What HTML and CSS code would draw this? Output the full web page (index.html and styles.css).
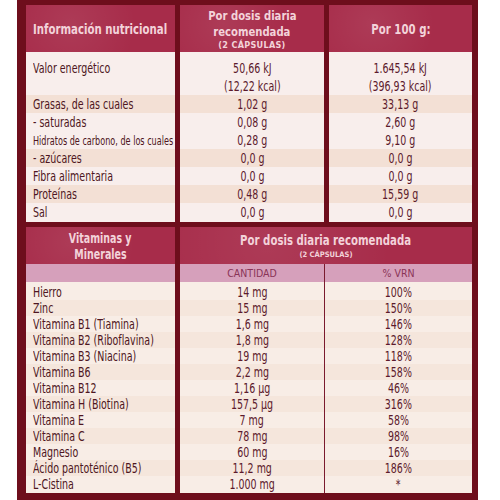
FILE: index.html
```html
<!DOCTYPE html>
<html lang="es">
<head>
    <meta charset="UTF-8">
    <title>Información nutricional</title>
    <link rel="stylesheet" href="styles.css">
</head>
<body>
    <div class="frame">
        <!-- Información nutricional -->
        <div class="table top">
            <div class="head left"><span class="t">Información nutricional</span></div>
            <div class="head two"><span class="t">Por dosis diaria</span><span class="t">recomendada</span><span class="small">(2 CÁPSULAS)</span></div>
            <div class="head"><span class="t">Por 100 g:</span></div>

            <div class="cell name first"><span class="t">Valor energético</span></div>
            <div class="cell val first"><span class="t">50,66 kJ<br>(12,22 kcal)</span></div>
            <div class="cell val first"><span class="t">1.645,54 kJ<br>(396,93 kcal)</span></div>

            <div class="cell name alt"><span class="t">Grasas, de las cuales</span></div>
            <div class="cell val alt"><span class="t">1,02 g</span></div>
            <div class="cell val alt"><span class="t">33,13 g</span></div>

            <div class="cell name"><span class="t">- saturadas</span></div>
            <div class="cell val"><span class="t">0,08 g</span></div>
            <div class="cell val"><span class="t">2,60 g</span></div>

            <div class="cell name"><span class="t tight">Hidratos de carbono, de los cuales</span></div>
            <div class="cell val"><span class="t">0,28 g</span></div>
            <div class="cell val"><span class="t">9,10 g</span></div>

            <div class="cell name alt"><span class="t">- azúcares</span></div>
            <div class="cell val alt"><span class="t">0,0 g</span></div>
            <div class="cell val alt"><span class="t">0,0 g</span></div>

            <div class="cell name"><span class="t">Fibra alimentaria</span></div>
            <div class="cell val"><span class="t">0,0 g</span></div>
            <div class="cell val"><span class="t">0,0 g</span></div>

            <div class="cell name alt"><span class="t">Proteínas</span></div>
            <div class="cell val alt"><span class="t">0,48 g</span></div>
            <div class="cell val alt"><span class="t">15,59 g</span></div>

            <div class="cell name last"><span class="t">Sal</span></div>
            <div class="cell val last"><span class="t">0,0 g</span></div>
            <div class="cell val last"><span class="t">0,0 g</span></div>
        </div>

        <!-- Vitaminas y Minerales -->
        <div class="table bottom">
            <div class="head name"><span class="t">Vitaminas y</span><span class="t">Minerales</span></div>
            <div class="head span"><span class="t">Por dosis diaria recomendada</span><span class="small mini">(2 CÁPSULAS)</span></div>

            <div class="sub name"></div>
            <div class="sub mid">CANTIDAD</div>
            <div class="sub">% VRN</div>

            <div class="row name top-pad"><span class="t">Hierro</span></div><div class="row val mid top-pad"><span class="t">14 mg</span></div><div class="row val top-pad"><span class="t">100%</span></div>
            <div class="row name alt"><span class="t">Zinc</span></div><div class="row val mid alt"><span class="t">15 mg</span></div><div class="row val alt"><span class="t">150%</span></div>
            <div class="row name"><span class="t">Vitamina B1 (Tiamina)</span></div><div class="row val mid"><span class="t">1,6 mg</span></div><div class="row val"><span class="t">146%</span></div>
            <div class="row name alt"><span class="t">Vitamina B2 (Riboflavina)</span></div><div class="row val mid alt"><span class="t">1,8 mg</span></div><div class="row val alt"><span class="t">128%</span></div>
            <div class="row name"><span class="t">Vitamina B3 (Niacina)</span></div><div class="row val mid"><span class="t">19 mg</span></div><div class="row val"><span class="t">118%</span></div>
            <div class="row name alt"><span class="t">Vitamina B6</span></div><div class="row val mid alt"><span class="t">2,2 mg</span></div><div class="row val alt"><span class="t">158%</span></div>
            <div class="row name"><span class="t">Vitamina B12</span></div><div class="row val mid"><span class="t">1,16 µg</span></div><div class="row val"><span class="t">46%</span></div>
            <div class="row name alt"><span class="t">Vitamina H (Biotina)</span></div><div class="row val mid alt"><span class="t">157,5 µg</span></div><div class="row val alt"><span class="t">316%</span></div>
            <div class="row name"><span class="t">Vitamina E</span></div><div class="row val mid"><span class="t">7 mg</span></div><div class="row val"><span class="t">58%</span></div>
            <div class="row name alt"><span class="t">Vitamina C</span></div><div class="row val mid alt"><span class="t">78 mg</span></div><div class="row val alt"><span class="t">98%</span></div>
            <div class="row name"><span class="t">Magnesio</span></div><div class="row val mid"><span class="t">60 mg</span></div><div class="row val"><span class="t">16%</span></div>
            <div class="row name alt"><span class="t">Ácido pantoténico (B5)</span></div><div class="row val mid alt"><span class="t">11,2 mg</span></div><div class="row val alt"><span class="t">186%</span></div>
            <div class="row name last"><span class="t">L-Cistina</span></div><div class="row val mid last"><span class="t">1.000 mg</span></div><div class="row val last"><span class="t">*</span></div>
        </div>
    </div>
</body>
</html>
```

FILE: styles.css
```css
/* General */
body {
    margin: 0;
    background: #fff;
    font-family: 'DejaVu Sans Condensed', 'DejaVu Sans', sans-serif;
}

/* condensed lettering, like the printed box */
.t {
    display: inline-block;
    white-space: nowrap;
    transform: scaleX(0.78);
    transform-origin: left center;
}

.frame {
    margin-left: 17px;
    width: 446px;
    height: 500px;
    padding: 5px 6px 0 9px;
    background: #6e0e1c;
    display: flex;
    flex-direction: column;
    gap: 5px;
}

.table {
    display: grid;
}

/* Headers */
.head {
    background: #a72c4a;
    background-image: radial-gradient(circle at 30% 40%, rgba(255, 255, 255, 0.07), transparent 60%);
    color: #f3d3da;
    font-size: 14.5px;
    font-weight: bold;
    line-height: 17px;
    text-align: center;
    display: flex;
    flex-direction: column;
    justify-content: center;
    align-items: center;
}

.head .t {
    transform-origin: center;
}

.head.two {
    font-size: 13px;
    line-height: 15.5px;
}

.head.two .t {
    transform: scaleX(0.86);
}

.head.left {
    align-items: flex-start;
    padding-left: 7px;
}

.head.left .t {
    transform-origin: left center;
}

.small {
    display: block;
    font-size: 9px;
    font-weight: bold;
    line-height: 10.5px;
    margin-top: 1px;
    letter-spacing: 0.3px;
}

.small.mini {
    font-size: 7.5px;
    line-height: 9px;
    letter-spacing: 0;
}

/* Top table */
.top {
    grid-template-columns: 149px 144px 143px;
    grid-template-rows: 47px;
    column-gap: 5px;
}

.top .head {
    padding-top: 2px;
}

.cell {
    height: 18px;
    line-height: 18px;
    background: #f8eeec;
    color: #4e1622;
    font-size: 13.5px;
}

.cell.alt {
    background: #f3e0d5;
}

.cell.first {
    height: 43px;
    padding-top: 7px;
    box-sizing: border-box;
}

.cell.last {
    height: 19px;
}

.name {
    padding-left: 7px;
}

.tight {
    font-size: 12.5px;
    transform: scaleX(0.72);
}

.val {
    text-align: center;
    color: #5c1a2c;
}

.val .t {
    transform-origin: center;
}

/* Bottom table */
.bottom {
    grid-template-columns: 154px 145px 147px;
    grid-template-rows: 37px 18px;
}

.bottom .name {
    margin-right: 5px;
}

.bottom .head.name {
    padding-left: 0;
    font-size: 13.5px;
    line-height: 16px;
}

.head.span {
    grid-column: span 2;
    padding-bottom: 1px;
}

.sub {
    background: #d6a0bb;
    color: #8a3457;
    font-size: 10.5px;
    line-height: 18px;
    text-align: center;
}

.mid {
    border-right: 1px solid #7a1a2e;
}

.row {
    height: 16px;
    line-height: 16px;
    background: #f8ede6;
    color: #4e1622;
    font-size: 13.5px;
}

.row.alt {
    background: #f5e6dc;
}

.row.top-pad {
    height: 18px;
    padding-top: 2px;
    box-sizing: border-box;
}

.row.last {
    height: 17px;
}

.row.val {
    color: #5c1a2c;
}
```
